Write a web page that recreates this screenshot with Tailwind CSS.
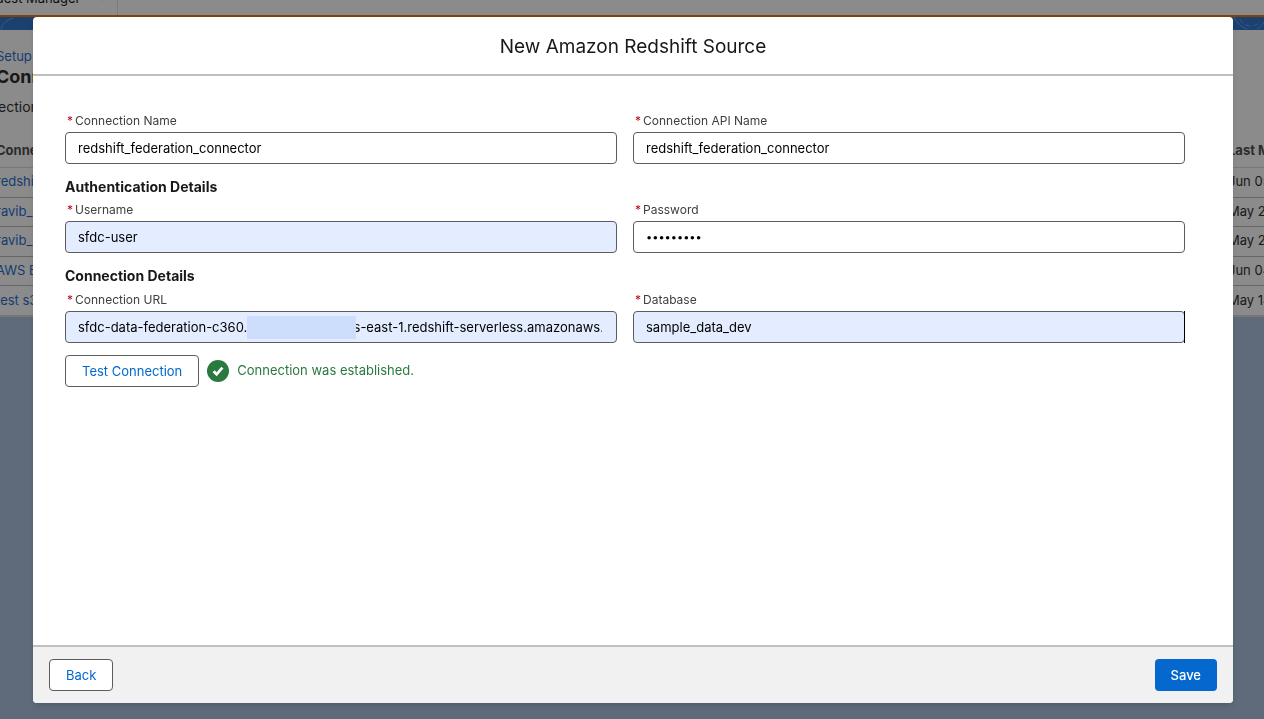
<!DOCTYPE html>
<html lang="en">

<head>
  <meta charset="UTF-8" />
  <meta name="viewport" content="width=device-width, initial-scale=1.0" />
  <script src="https://cdn.jsdelivr.net/npm/@tailwindcss/browser@4"></script>
  <title>New Amazon Redshift Source</title>
</head>

<body class="h-screen overflow-hidden bg-[#5f6b7a] font-['Inter','Liberation_Sans',sans-serif] text-[13px] text-[#181818]">
  <!-- Page behind the modal -->
  <div aria-hidden="true">
    <header class="h-[17px] overflow-hidden border-b-2 border-[#804208] bg-[#8b8b8b]">
      <div class="-mt-5 flex h-[35px] w-[118px] items-center gap-4 border-r border-[#7b7b7b] text-[#0e0e0e]">
        <span class="-ml-1 leading-[18px]">uest Manager</span>
        <svg class="size-2.5" viewBox="0 0 10 10" fill="none" stroke="#333" stroke-width="2"><path d="M1 2l4 4 4-4" /></svg>
      </div>
    </header>
    <div class="flex h-[13px] justify-between bg-[#1c4170]">
      <svg class="h-[13px] w-[34px]" viewBox="0 0 34 13" fill="none" stroke="#355b88"><path d="M1 13C2 7 6 3 13 1" /></svg>
      <svg class="h-[13px] w-[34px]" viewBox="0 0 34 13" fill="none" stroke="#355b88"><path d="M4 0c3 6 7 10 13 12M27 12c3-2 5-4 7-7" /><path d="M10 2c2 4 5 6 9 7s8-1 11-5" stroke-dasharray="5 3" /></svg>
    </div>
    <div class="border-b-2 border-[#777] bg-[#8b8b8b] pt-4">
      <div class="-ml-1">
        <p class="text-[13px] leading-5 text-[#143c72]">Setup</p>
        <p class="text-lg leading-[22px] font-bold">Connectors</p>
        <p class="pt-2 pl-0.5 text-sm leading-[22px]">ections</p>
      </div>
      <table class="mt-[17px] -ml-1 w-[calc(100%+4px)] table-fixed text-left">
        <thead>
          <tr class="h-8 border-b border-[#777] text-[#2b2b2b]">
            <th class="font-bold">Connection</th>
            <th class="w-9 font-bold whitespace-nowrap">Last M</th>
          </tr>
        </thead>
        <tbody>
          <tr class="h-[30px] border-b border-[#666]"><td class="text-[#143c72]">redshift</td><td class="whitespace-nowrap">Jun 05</td></tr>
          <tr class="h-[29px] border-b border-[#666]"><td class="text-[#143c72]">ravib_s</td><td class="whitespace-nowrap">May 2</td></tr>
          <tr class="h-[30px] border-b border-[#666]"><td class="text-[#143c72]">ravib_r</td><td class="whitespace-nowrap">May 2</td></tr>
          <tr class="h-[29px] border-b border-[#666]"><td class="text-[#143c72]">AWS E</td><td class="whitespace-nowrap">Jun 04</td></tr>
          <tr class="h-[30px]"><td class="text-[#143c72]">test s3</td><td class="whitespace-nowrap">May 14</td></tr>
        </tbody>
      </table>
    </div>
  </div>

  <!-- Modal -->
  <div class="fixed inset-0 flex pt-[17px] pr-[31px] pb-4 pl-[33px]">
    <section role="dialog" aria-labelledby="modal-title" class="flex flex-1 flex-col overflow-hidden rounded-sm bg-white shadow-md">
      <header class="border-b-2 border-[#c0c0c0] px-4 pt-[17px] pb-3.5 text-center">
        <h1 id="modal-title" class="text-[19px] leading-[26px]">New Amazon Redshift Source</h1>
      </header>

      <form class="flex min-h-0 flex-1 flex-col">
        <div class="flex-1 pt-8 pr-12 pl-8">
          <div class="grid grid-cols-2 gap-x-4">
            <div>
              <label for="connection-name" class="flex h-6 items-center gap-0.5 pt-0.5 pl-0.5 text-xs text-[#3e3e3c]"><abbr class="text-[#ba0517] no-underline">*</abbr> Connection Name</label>
              <input type="text" id="connection-name" value="redshift_federation_connector" class="block h-8 w-full rounded-sm border border-[#5c5c5c] bg-white pr-4 pl-3 text-black" />
            </div>
            <div>
              <label for="api-name" class="flex h-6 items-center gap-0.5 pt-0.5 pl-0.5 text-xs text-[#3e3e3c]"><abbr class="text-[#ba0517] no-underline">*</abbr> Connection API Name</label>
              <input type="text" id="api-name" value="redshift_federation_connector" class="block h-8 w-full rounded-sm border border-[#5c5c5c] bg-white pr-4 pl-3 text-black" />
            </div>
          </div>

          <h2 class="mt-3 text-sm leading-[21px] font-bold">Authentication Details</h2>
          <div class="grid grid-cols-2 gap-x-4">
            <div>
              <label for="username" class="flex h-6 items-center gap-0.5 pt-0.5 pl-0.5 text-xs text-[#3e3e3c]"><abbr class="text-[#ba0517] no-underline">*</abbr> Username</label>
              <input type="text" id="username" value="sfdc-user" class="block h-8 w-full rounded-sm border border-[#5c5c5c] bg-[#e4edff] pr-4 pl-3 text-black" />
            </div>
            <div>
              <label for="password" class="flex h-6 items-center gap-0.5 pt-0.5 pl-0.5 text-xs text-[#3e3e3c]"><abbr class="text-[#ba0517] no-underline">*</abbr> Password</label>
              <input type="password" id="password" value="123456789" class="block h-8 w-full rounded-sm border border-[#5c5c5c] bg-white pr-4 pl-3 text-[11px] text-black" />
            </div>
          </div>

          <h2 class="mt-3 text-sm leading-[22px] font-bold">Connection Details</h2>
          <div class="grid grid-cols-2 gap-x-4">
            <div>
              <label for="connection-url" class="flex h-6 items-center gap-0.5 pt-0.5 pl-0.5 text-xs text-[#3e3e3c]"><abbr class="text-[#ba0517] no-underline">*</abbr> Connection URL</label>
              <div class="relative">
                <input type="text" id="connection-url" value="sfdc-data-federation-c360.000000000010.us-east-1.redshift-serverless.amazonaws.com" class="block h-8 w-full rounded-sm border border-[#5c5c5c] bg-[#e4edff] pr-3.5 pl-3 text-black" />
                <!-- account id is masked -->
                <span class="absolute top-[5px] left-[182px] h-[23px] w-[109px] bg-[#cdddfc]"></span>
              </div>
            </div>
            <div>
              <label for="database" class="flex h-6 items-center gap-0.5 pt-0.5 pl-0.5 text-xs text-[#3e3e3c]"><abbr class="text-[#ba0517] no-underline">*</abbr> Database</label>
              <div class="relative">
                <input type="text" id="database" value="sample_data_dev" class="block h-8 w-full rounded-sm border border-[#5c5c5c] bg-[#e4edff] pr-4 pl-3 text-black" />
                <span class="absolute inset-y-0 right-0 w-px bg-black"></span>
              </div>
            </div>
          </div>

          <div class="mt-3 flex items-center gap-2">
            <button type="button" class="h-8 rounded-sm border border-[#5c5c5c] bg-white px-4 pt-0.5 text-[#0168cf]">Test Connection</button>
            <svg class="size-[22px]" viewBox="0 0 22 22" fill="none"><circle cx="11" cy="11" r="11" fill="#2a7a3f" /><path d="M6.6 11.3l3 3 5.8-6.6" stroke="#fff" stroke-width="2.8" /></svg>
            <p class="text-[#2a7a3f]">Connection was established.</p>
          </div>
        </div>

        <footer class="flex justify-between border-t-2 border-[#c0c0c0] bg-[#f1f1f1] px-4 py-3">
          <button type="button" class="h-8 rounded-sm border border-[#5c5c5c] bg-white px-4 pt-0.5 text-[#0168cf]">Back</button>
          <button type="submit" class="h-8 rounded-sm bg-[#0568ce] px-4 pt-0.5 font-medium text-white">Save</button>
        </footer>
      </form>
    </section>
  </div>
</body>

</html>
